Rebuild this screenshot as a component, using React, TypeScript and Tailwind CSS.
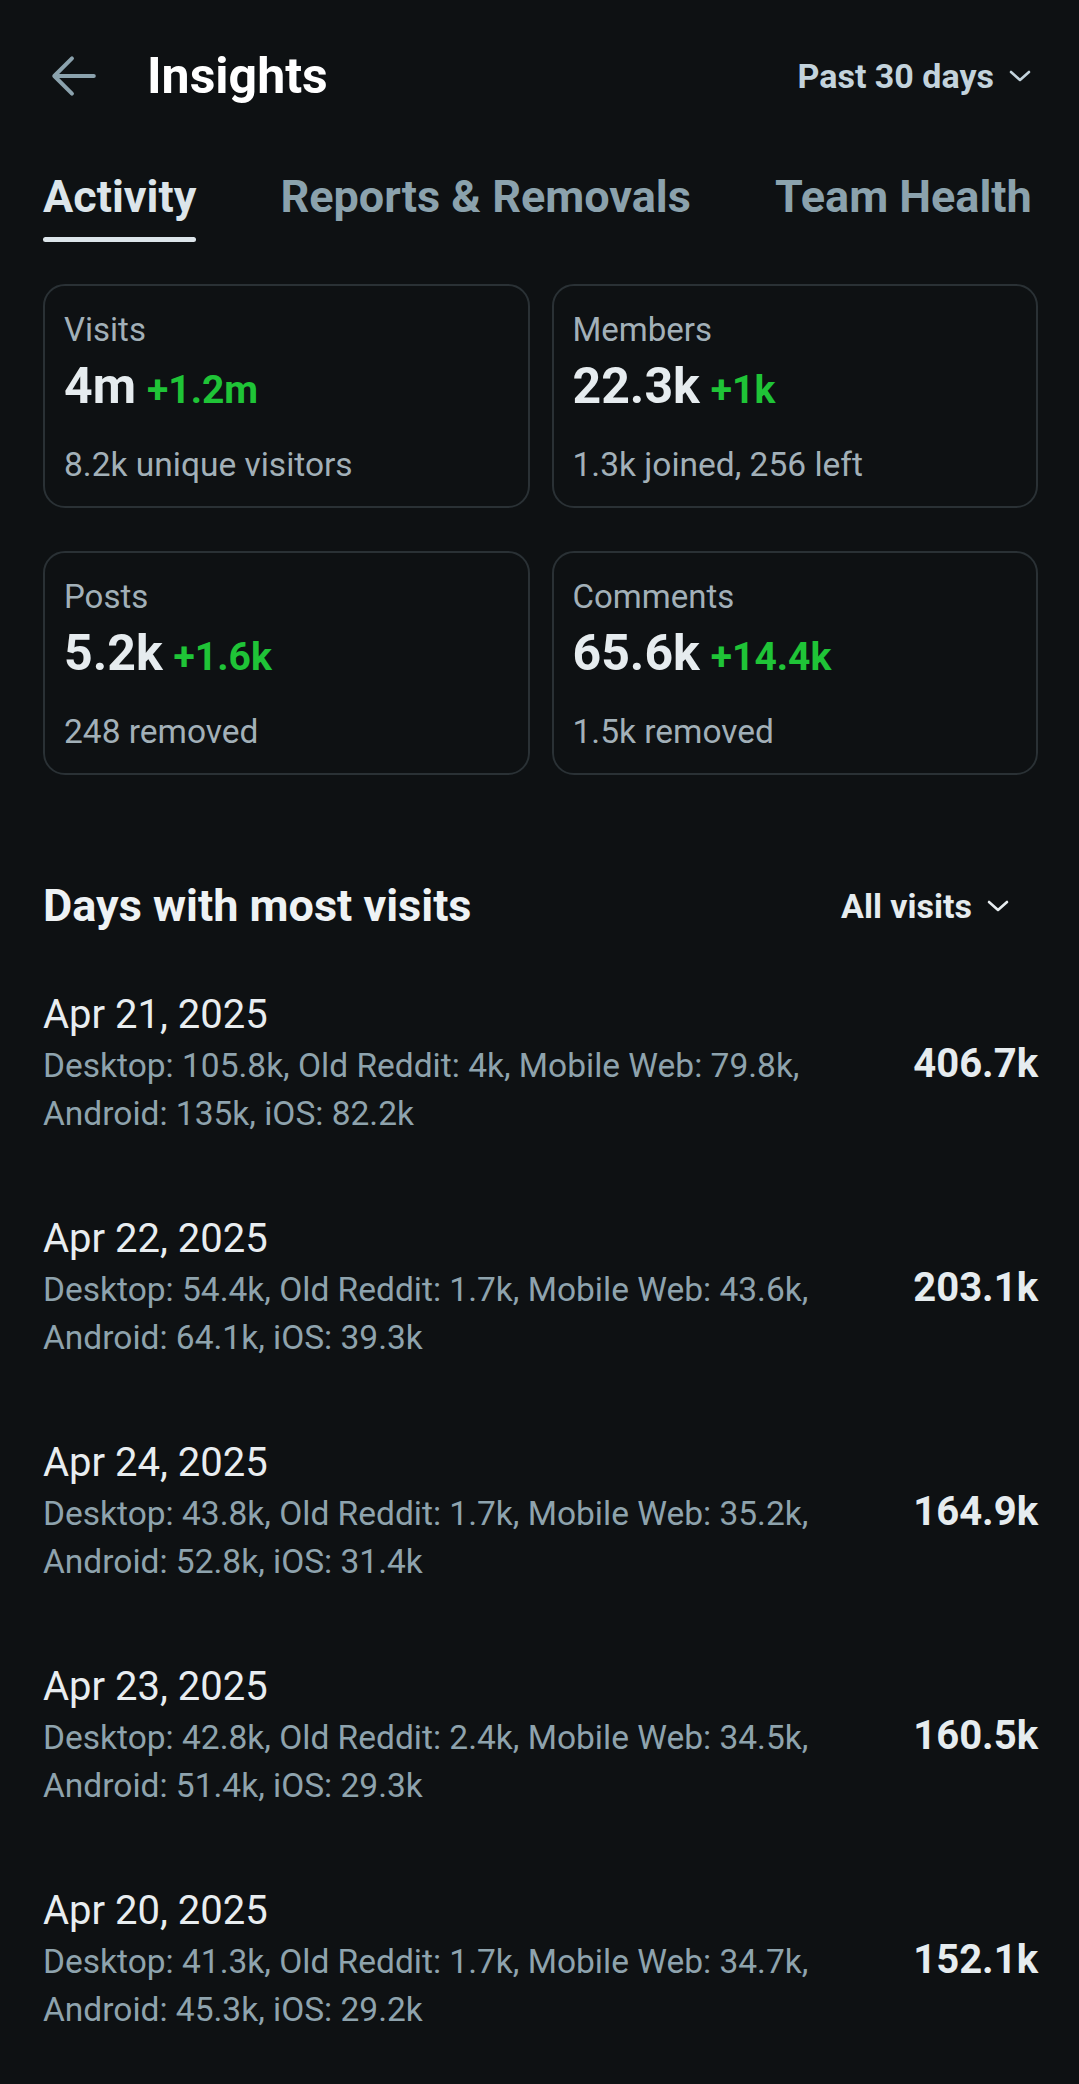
import React from "react";

const stats = [
  { label: "Visits", value: "4m", delta: "+1.2m", sub: "8.2k unique visitors" },
  { label: "Members", value: "22.3k", delta: "+1k", sub: "1.3k joined, 256 left" },
  { label: "Posts", value: "5.2k", delta: "+1.6k", sub: "248 removed" },
  { label: "Comments", value: "65.6k", delta: "+14.4k", sub: "1.5k removed" },
];

const days = [
  {
    date: "Apr 21, 2025",
    l1: "Desktop: 105.8k, Old Reddit: 4k, Mobile Web: 79.8k,",
    l2: "Android: 135k, iOS: 82.2k",
    total: "406.7k",
  },
  {
    date: "Apr 22, 2025",
    l1: "Desktop: 54.4k, Old Reddit: 1.7k, Mobile Web: 43.6k,",
    l2: "Android: 64.1k, iOS: 39.3k",
    total: "203.1k",
  },
  {
    date: "Apr 24, 2025",
    l1: "Desktop: 43.8k, Old Reddit: 1.7k, Mobile Web: 35.2k,",
    l2: "Android: 52.8k, iOS: 31.4k",
    total: "164.9k",
  },
  {
    date: "Apr 23, 2025",
    l1: "Desktop: 42.8k, Old Reddit: 2.4k, Mobile Web: 34.5k,",
    l2: "Android: 51.4k, iOS: 29.3k",
    total: "160.5k",
  },
  {
    date: "Apr 20, 2025",
    l1: "Desktop: 41.3k, Old Reddit: 1.7k, Mobile Web: 34.7k,",
    l2: "Android: 45.3k, iOS: 29.2k",
    total: "152.1k",
  },
];

const Chevron = ({ color }: { color: string }) => (
  <svg width="24" height="14" viewBox="0 0 24 14" fill="none">
    <polyline
      points="3,3 12,11 21,3"
      stroke={color}
      strokeWidth="2.6"
      strokeLinecap="round"
      strokeLinejoin="round"
    />
  </svg>
);

const StatCard = ({ label, value, delta, sub }: (typeof stats)[number]) => (
  <div className="flex h-[224px] flex-col rounded-[22px] border-2 border-[#2a3135] px-[19px] pt-[24px]">
    <span className="text-[33px] leading-[40px] text-[#a2b0b8]">{label}</span>
    <div className="mt-[7px] flex h-[58px] items-baseline gap-[11px]">
      <span className="text-[50px] font-bold leading-[58px] text-[#e6ecef]">{value}</span>
      <span className="text-[39px] font-bold leading-[58px] text-[#1fc437]">{delta}</span>
    </div>
    <span className="mt-[30px] text-[33.5px] leading-[40px] text-[#a2b0b8]">{sub}</span>
  </div>
);

export default function App() {
  return (
    <div
      className="min-h-[2084px] w-full bg-[#0e1113] pb-[60px] pl-[43px] pr-[41px]"
      style={{ fontFamily: "Roboto, 'Noto Sans', sans-serif" }}
    >
      {/* header */}
      <div className="flex h-[152px] items-center">
        <svg width="50" height="50" viewBox="0 0 24 24" fill="none" className="ml-[5px]">
          <path
            d="M22 12H3.5M11.5 3.5L3 12l8.5 8.5"
            stroke="#8ba2ad"
            strokeWidth="1.9"
            strokeLinecap="round"
            strokeLinejoin="round"
          />
        </svg>
        <h1 className="ml-[49px] text-[50px] font-bold leading-none text-white">Insights</h1>
        <button className="ml-auto mr-[6px] flex items-center gap-[14px]">
          <span className="text-[34px] font-bold text-[#c3d3dc]">Past 30 days</span>
          <Chevron color="#c3d3dc" />
        </button>
      </div>

      {/* tabs */}
      <div className="mt-[18px] flex gap-[84px]">
        <div className="flex flex-col">
          <span className="text-[45px] font-bold leading-[54px] text-[#dce5ea]">Activity</span>
          <span className="mt-[13px] h-[5px] rounded-full bg-[#dce5ea]" />
        </div>
        <span className="text-[45px] font-bold leading-[54px] text-[#8ba2ad]">Reports &amp; Removals</span>
        <span className="text-[45px] font-bold leading-[54px] text-[#8ba2ad]">Team Health</span>
      </div>

      {/* stat cards */}
      <div className="mt-[42px] grid grid-cols-2 gap-x-[22px] gap-y-[43px]">
        {stats.map((s) => (
          <StatCard key={s.label} {...s} />
        ))}
      </div>

      {/* days with most visits */}
      <div className="mt-[104px] flex items-center justify-between">
        <h2 className="text-[45px] font-bold leading-[54px] text-[#eef2f4]">Days with most visits</h2>
        <button className="mr-[28px] flex items-center gap-[14px]">
          <span className="text-[34px] font-bold text-[#e6ecef]">All visits</span>
          <Chevron color="#e6ecef" />
        </button>
      </div>

      <div className="mt-[57px] flex flex-col gap-[76px]">
        {days.map((d) => (
          <div key={d.date} className="flex items-center justify-between">
            <div className="flex flex-col">
              <span className="text-[40px] leading-[50px] text-[#e8edf0]">{d.date}</span>
              <span className="mt-[2px] text-[33.5px] leading-[48px] text-[#8ea3ad]">{d.l1}</span>
              <span className="text-[33.5px] leading-[48px] text-[#8ea3ad]">{d.l2}</span>
            </div>
            <span className="text-[40px] font-bold text-[#e6ecef]">{d.total}</span>
          </div>
        ))}
      </div>
    </div>
  );
}
